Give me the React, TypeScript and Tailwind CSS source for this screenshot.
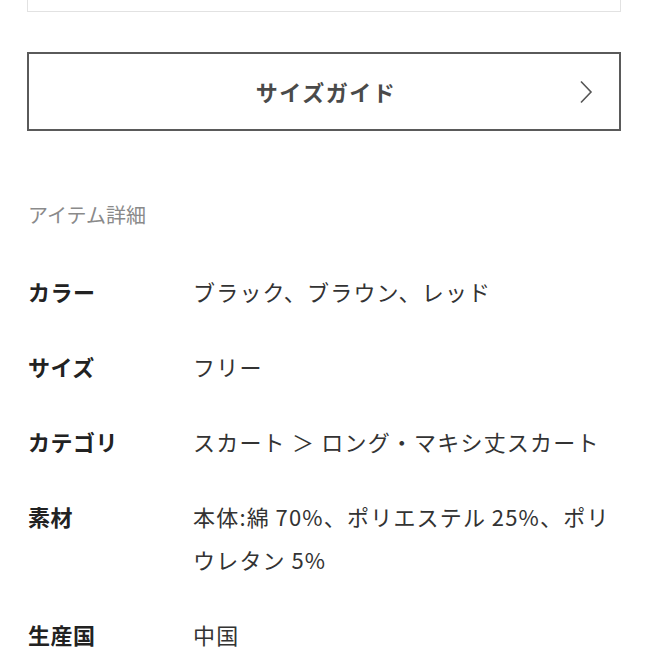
import React from "react";

const rows: { label: string; lines: string[] }[] = [
  { label: "カラー", lines: ["ブラック、ブラウン、レッド"] },
  { label: "サイズ", lines: ["フリー"] },
  { label: "カテゴリ", lines: ["スカート ＞ ロング・マキシ丈スカート"] },
  { label: "素材", lines: ["本体:綿\u200970%、ポリエステル\u200925%、ポリ", "ウレタン\u20095%"] },
  { label: "生産国", lines: ["中国"] },
];

export default function App() {
  return (
    <div
      className="w-[648px] h-[648px] overflow-hidden bg-white"
      style={{ fontFamily: '"Noto Sans CJK JP", "Noto Sans", sans-serif' }}
    >
      <div className="mx-[27px] -mt-[40px] h-[52px] border border-[#e2e2e2] bg-white" />
      <button className="mt-[40px] mx-[27px] w-[594px] h-[79px] border-2 border-[#5a5a5a] flex items-center justify-center relative">
        <span className="text-[22px] font-bold text-[#4a4a4a] tracking-[1.5px] pl-[4px]">サイズガイド</span>
        <svg
          className="absolute right-[26px] top-1/2 -translate-y-1/2"
          width="14"
          height="24"
          viewBox="0 0 14 24"
          fill="none"
        >
          <path d="M2 1.5 L12 12 L2 22.5" stroke="#555" strokeWidth="1.6" />
        </svg>
      </button>
      <div className="px-[28px]">
        <div className="mt-[70px] text-[20px] text-[#8a8a8a] leading-[28px]">アイテム詳細</div>
        <div className="mt-[41px] flex flex-col gap-[32px]">
          {rows.map((r) => (
            <div key={r.label} className="flex text-[22px] leading-[43px]">
              <div className="w-[165px] shrink-0 font-bold text-[#222] tracking-[0.5px]">{r.label}</div>
              <div className="flex-1 text-[#333] tracking-[1.2px] whitespace-nowrap">
                {r.lines.map((l) => (
                  <div key={l}>{l}</div>
                ))}
              </div>
            </div>
          ))}
        </div>
      </div>
    </div>
  );
}
